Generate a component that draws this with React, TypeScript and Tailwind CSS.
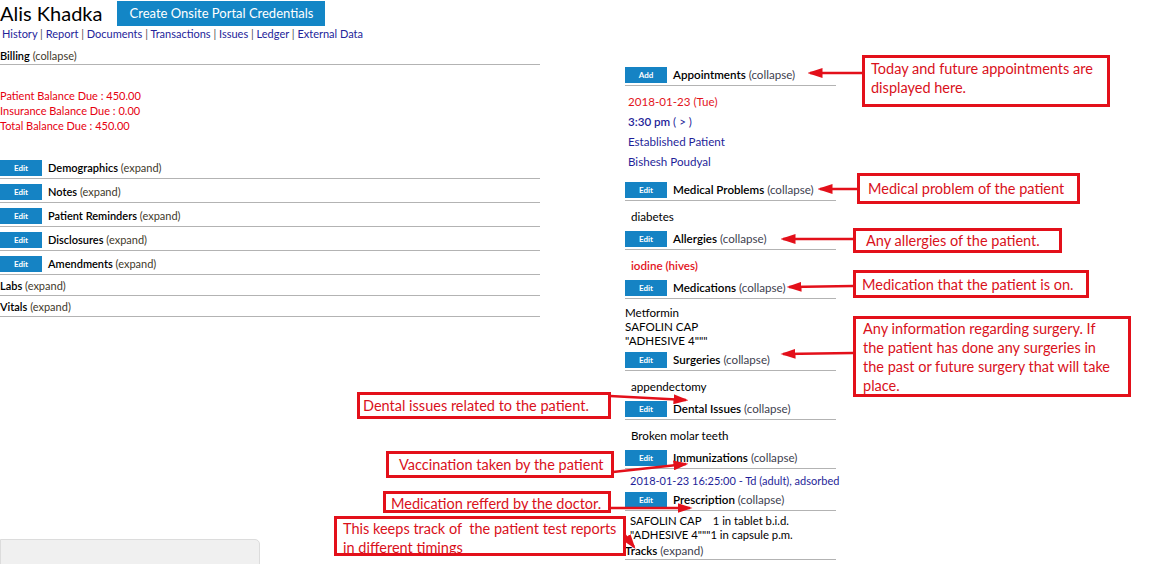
import React from "react";

const F = { fontFamily: "Lato, 'Noto Sans', sans-serif" };

function EditBtn({ label = "Edit" }: { label?: string }) {
  return (
    <span className="flex h-[16px] w-[42px] shrink-0 items-center justify-center bg-[#1583c4] text-[8px] font-bold text-white">
      {label}
    </span>
  );
}

function LeftEditRow({ title, state }: { title: string; state: string }) {
  return (
    <div className="flex h-[24px] items-start border-b border-[#b3b3b3] pt-[5px]">
      <EditBtn />
      <span className="ml-[6px] whitespace-nowrap text-[11px] leading-[16px] text-black">
        <span className="font-semibold">{title}</span> <span className="text-[#3f3a2c]">{state}</span>
      </span>
    </div>
  );
}

function RightHeader({ title, state, btn = "Edit" }: { title: string; state: string; btn?: string }) {
  return (
    <div className="flex h-[19px] items-start border-b border-[#b3b3b3]">
      <EditBtn label={btn} />
      <span className="ml-[6px] whitespace-nowrap text-[11.6px] leading-[16px] text-black">
        <span className="font-semibold">{title}</span> <span className="text-[#40414f]">{state}</span>
      </span>
    </div>
  );
}

function Note({ className, children }: { className: string; children: React.ReactNode }) {
  return (
    <div
      className={`absolute whitespace-nowrap border-[3px] border-[#e3101a] bg-white text-[14.5px] leading-[19px] text-[#d9111b] ${className}`}
      style={{ fontFamily: "Lato, 'Open Sans', sans-serif" }}
    >
      {children}
    </div>
  );
}

export default function App() {
  return (
    <div className="relative h-[564px] w-[1154px] overflow-hidden bg-white text-black" style={F}>
      {/* header */}
      <div className="flex items-start">
        <div className="text-[20px] leading-[27px] text-black">Alis Khadka</div>
        <div className="ml-[15px] mt-[1px] flex h-[25px] w-[208px] items-center justify-center bg-[#1386c6] text-[13px] text-white">
          Create Onsite Portal Credentials
        </div>
      </div>
      <div className="pl-[2px] text-[11px] leading-[13px] text-[#24249a]">
        History <span className="text-[#555]">|</span> Report <span className="text-[#555]">|</span> Documents{" "}
        <span className="text-[#555]">|</span> Transactions <span className="text-[#555]">|</span> Issues{" "}
        <span className="text-[#555]">|</span> Ledger <span className="text-[#555]">|</span> External Data
      </div>

      <div className="mt-[8px] flex items-start">
        {/* left column */}
        <div className="w-[540px]">
          <div className="h-[17px] border-b border-[#b3b3b3] text-[11px] leading-[16px]">
            <span className="font-semibold">Billing</span> <span className="text-[#3f3a2c]">(collapse)</span>
          </div>
          <div className="pb-[22px] pt-[23px] text-[11px] leading-[15px] text-[#e6000f]">
            <div>Patient Balance Due : 450.00</div>
            <div>Insurance Balance Due : 0.00</div>
            <div>Total Balance Due : 450.00</div>
          </div>
          <LeftEditRow title="Demographics" state="(expand)" />
          <LeftEditRow title="Notes" state="(expand)" />
          <LeftEditRow title="Patient Reminders" state="(expand)" />
          <LeftEditRow title="Disclosures" state="(expand)" />
          <LeftEditRow title="Amendments" state="(expand)" />
          <div className="h-[21px] border-b border-[#b3b3b3] pt-[3px] text-[11px] leading-[16px]">
            <span className="font-semibold">Labs</span> <span className="text-[#3f3a2c]">(expand)</span>
          </div>
          <div className="h-[21px] border-b border-[#b3b3b3] pt-[3px] text-[11px] leading-[16px]">
            <span className="font-semibold">Vitals</span> <span className="text-[#3f3a2c]">(expand)</span>
          </div>
          <div className="mt-[222px] h-[40px] w-[260px] rounded-tr-[5px] border border-[#dcdcdc] bg-[#f0f0f0]" />
        </div>

        {/* right column */}
        <div className="ml-[85px] mt-[19px] w-[211px] whitespace-nowrap text-[11.6px]">
          <RightHeader title="Appointments" state="(collapse)" btn="Add" />
          <div className="pb-[10px] pl-[3px] pt-[6px] leading-[20px] text-[#1f1f99]">
            <div className="text-[#e3141c]">2018-01-23 (Tue)</div>
            <div className="font-semibold">3:30 pm <span className="font-normal">( &gt; )</span></div>
            <div>Established Patient</div>
            <div>Bishesh Poudyal</div>
          </div>
          <RightHeader title="Medical Problems" state="(collapse)" />
          <div className="pb-[6px] pl-[6px] pt-[8px] leading-[16px]">diabetes</div>
          <RightHeader title="Allergies" state="(collapse)" />
          <div className="pb-[6px] pl-[6px] pt-[8px] font-semibold leading-[16px] text-[#e3141c]">iodine (hives)</div>
          <RightHeader title="Medications" state="(collapse)" />
          <div className="pb-[4px] pt-[7px] leading-[14px]">
            <div>Metformin</div>
            <div>SAFOLIN CAP</div>
            <div>"ADHESIVE 4"""</div>
          </div>
          <RightHeader title="Surgeries" state="(collapse)" />
          <div className="pb-[6px] pl-[6px] pt-[8px] leading-[16px]">appendectomy</div>
          <RightHeader title="Dental Issues" state="(collapse)" />
          <div className="pb-[6px] pl-[6px] pt-[8px] leading-[16px]">Broken molar teeth</div>
          <RightHeader title="Immunizations" state="(collapse)" />
          <div className="pb-[3px] pl-[5px] pt-[4px] text-[11px] leading-[16px] text-[#1f1f99]">
            2018-01-23 16:25:00 - Td (adult), adsorbed
          </div>
          <RightHeader title="Prescription" state="(collapse)" />
          <div className="pl-[5px] pt-[3px] text-[11.3px] leading-[14px]">
            <div className="whitespace-pre">SAFOLIN CAP    1 in tablet b.i.d.</div>
            <div className="whitespace-pre">"ADHESIVE 4"""1 in capsule p.m.</div>
          </div>
          <div className="h-[18px] border-b border-[#b3b3b3] pt-[1px] leading-[16px]">
            <span className="font-semibold">Tracks</span> <span className="text-[#40414f]">(expand)</span>
          </div>
        </div>
      </div>

      {/* annotation arrows */}
      <svg className="pointer-events-none absolute left-0 top-0" width="1154" height="564">
        <defs>
          <marker id="ah" markerWidth="6" markerHeight="4" refX="5" refY="2" orient="auto" markerUnits="strokeWidth">
            <path d="M0,0 L6,2 L0,4 Z" fill="#e3101a" />
          </marker>
        </defs>
        <g stroke="#e3101a" strokeWidth="2.5" fill="none" markerEnd="url(#ah)">
          <line x1="862" y1="73" x2="810" y2="73" />
          <line x1="857" y1="189" x2="820" y2="189" />
          <line x1="853" y1="239" x2="783" y2="239" />
          <line x1="853" y1="286" x2="789" y2="287" />
          <line x1="853" y1="353" x2="783" y2="354" />
          <line x1="610" y1="396" x2="686" y2="400" />
          <line x1="613" y1="472" x2="686" y2="464" />
          <line x1="610" y1="508" x2="690" y2="508" />
          <line x1="621" y1="530" x2="634" y2="547" />
        </g>
      </svg>

      {/* annotation boxes */}
      <Note className="left-[862px] top-[55px] h-[52px] w-[248px] px-[6px] pt-[1px]">
        Today and future appointments are
        <br />
        displayed here.
      </Note>
      <Note className="left-[857px] top-[173px] h-[31px] w-[223px] pl-[8px] pt-[3px]">Medical problem of the patient</Note>
      <Note className="left-[853px] top-[228px] h-[25px] w-[209px] pl-[10px] pt-[0px]">Any allergies of the patient.</Note>
      <Note className="left-[853px] top-[270px] h-[28px] w-[236px] pl-[6px] pt-[2px]">Medication that the patient is on.</Note>
      <Note className="left-[853px] top-[316px] h-[81px] w-[278px] pl-[7px] pt-[0px]">
        Any information regarding surgery. If
        <br />
        the patient has done any surgeries in
        <br />
        the past or future surgery that will take
        <br />
        place.
      </Note>
      <Note className="left-[357px] top-[392px] h-[27px] w-[254px] pl-[3px] pt-[1px]">Dental issues related to the patient.</Note>
      <Note className="left-[386px] top-[451px] h-[27px] w-[228px] pl-[10px] pt-[1px]">Vaccination taken by the patient</Note>
      <Note className="left-[383px] top-[491px] h-[22px] w-[228px] pl-[5px] pt-[0px] leading-[17px]">Medication refferd by the doctor.</Note>
      <Note className="left-[334px] top-[516px] h-[40px] w-[292px] pl-[6px] pt-[0px]">
        This keeps track of&nbsp; the patient test reports
        <br />
        in different timings
      </Note>
    </div>
  );
}
